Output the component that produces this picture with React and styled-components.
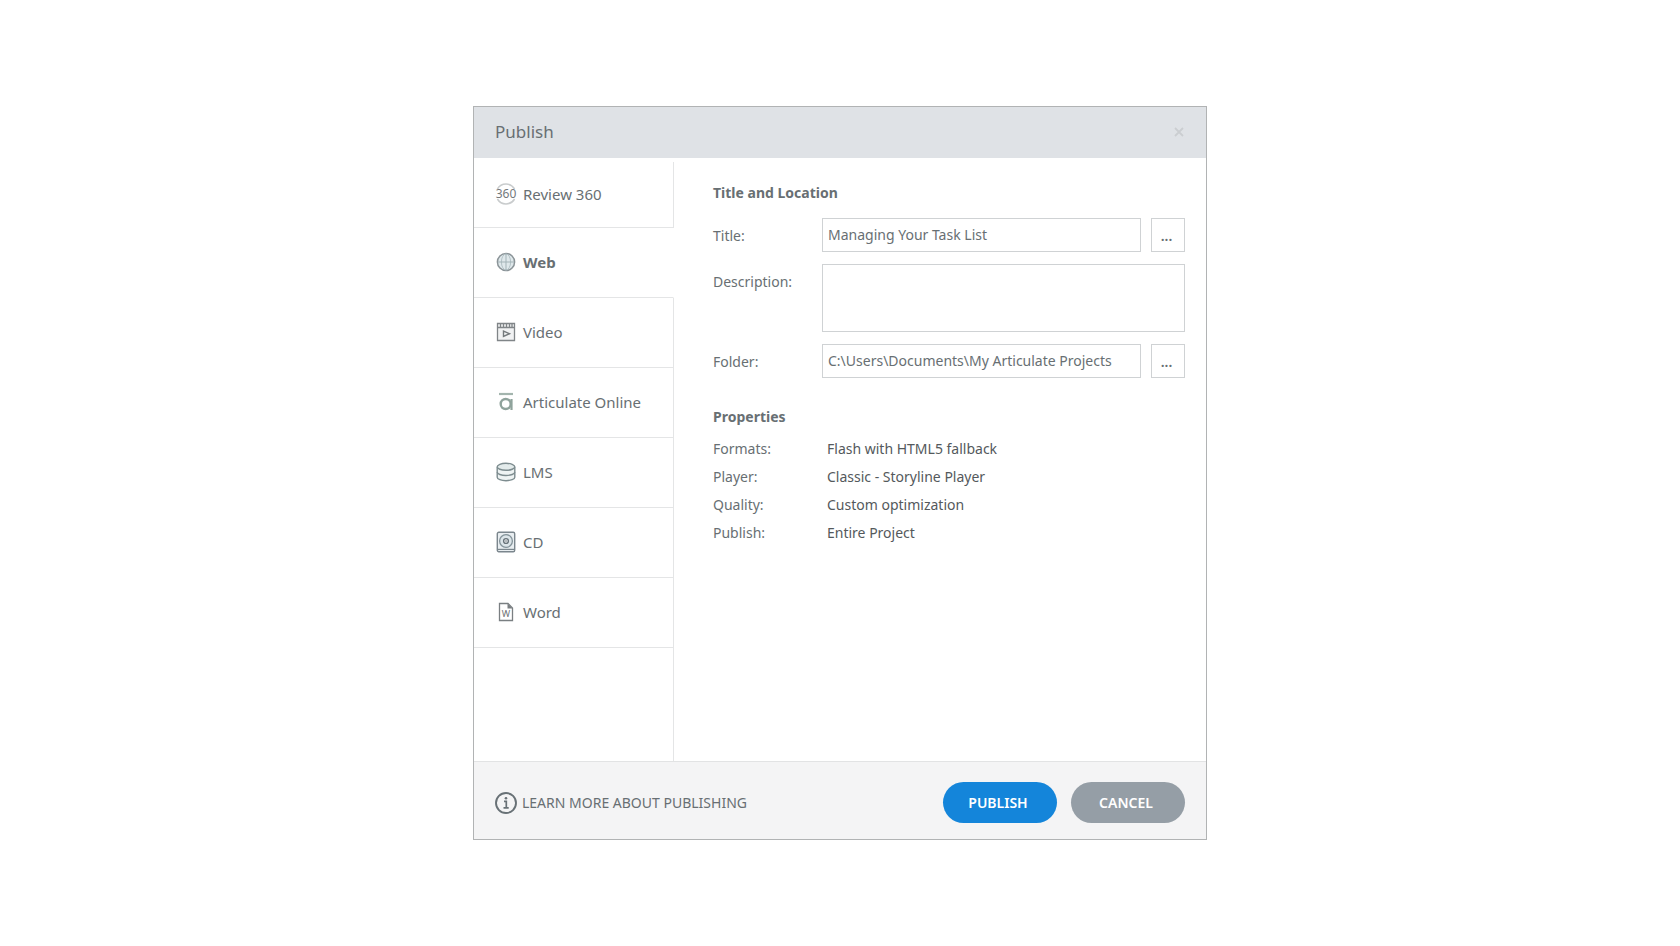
import React, { useState } from 'react';
import styled, { createGlobalStyle, css } from 'styled-components';

const text = '#686f73';
const line = '#e4e5e6';
const border = '#cfd2d4';
const fontStack = '"Noto Sans", "Open Sans", sans-serif';

const tabs = [
  { id: 'review', label: 'Review 360', Icon: ReviewIcon },
  { id: 'web', label: 'Web', Icon: WebIcon },
  { id: 'video', label: 'Video', Icon: VideoIcon },
  { id: 'online', label: 'Articulate Online', Icon: ArticulateIcon },
  { id: 'lms', label: 'LMS', Icon: LmsIcon },
  { id: 'cd', label: 'CD', Icon: CdIcon },
  { id: 'word', label: 'Word', Icon: WordIcon },
];

const properties = [
  ['Formats:', 'Flash with HTML5 fallback'],
  ['Player:', 'Classic - Storyline Player'],
  ['Quality:', 'Custom optimization'],
  ['Publish:', 'Entire Project'],
];

function App() {
  const [active, setActive] = useState('web');
  const [title, setTitle] = useState('Managing Your Task List');
  const [description, setDescription] = useState('');
  const [folder, setFolder] = useState('C:\\Users\\Documents\\My Articulate Projects');

  return (
    <Page>
      <GlobalStyle />
      <Dialog role="dialog" aria-labelledby="dialog-title">
        <Header>
          <DialogTitle id="dialog-title">Publish</DialogTitle>
          <CloseButton type="button" aria-label="Close">
            <CloseIcon />
          </CloseButton>
        </Header>
        <Body>
          <Sidebar>
            {tabs.map(({ id, label, Icon }) => (
              <Tab key={id} type="button" $active={id === active} onClick={() => setActive(id)}>
                <Icon />
                {label}
              </Tab>
            ))}
            <SidebarRest />
          </Sidebar>
          <Content>
            <Heading>Title and Location</Heading>
            <Form>
              <Label htmlFor="title">Title:</Label>
              <FieldRow>
                <Input id="title" value={title} onChange={(e) => setTitle(e.target.value)} />
                <BrowseButton type="button" aria-label="Title options">...</BrowseButton>
              </FieldRow>
              <Label htmlFor="description">Description:</Label>
              <TextArea
                id="description"
                value={description}
                onChange={(e) => setDescription(e.target.value)}
              />
              <Label htmlFor="folder">Folder:</Label>
              <FieldRow>
                <Input id="folder" value={folder} onChange={(e) => setFolder(e.target.value)} />
                <BrowseButton type="button" aria-label="Browse folders">...</BrowseButton>
              </FieldRow>
            </Form>
            <Heading>Properties</Heading>
            <PropertyList>
              {properties.map(([name, value]) => (
                <React.Fragment key={name}>
                  <dt>{name}</dt>
                  <PropertyValue>{value}</PropertyValue>
                </React.Fragment>
              ))}
            </PropertyList>
          </Content>
        </Body>
        <Footer>
          <LearnMore href="#learn-more">
            <InfoIcon />
            LEARN MORE ABOUT PUBLISHING
          </LearnMore>
          <Actions>
            <ActionButton type="button" $primary>PUBLISH</ActionButton>
            <ActionButton type="button">CANCEL</ActionButton>
          </Actions>
        </Footer>
      </Dialog>
    </Page>
  );
}

function ReviewIcon() {
  return (
    <TabIcon viewBox="0 0 22 22">
      <path d="M2.4 6a10 10 0 0 1 17.2 0M2.400 16a10 10 0 0 0 17.200 0" stroke="#c9cccd" strokeWidth="1.5" />
      <text x="11" y="15" textAnchor="middle" fontSize="12" fill="#74797c">360</text>
    </TabIcon>
  );
}

function WebIcon() {
  return (
    <TabIcon viewBox="0 0 22 22">
      <circle cx="11" cy="11" r="8.6" fill="#dfe8eb" stroke="#8b9498" strokeWidth="1.5" />
      <ellipse cx="11" cy="11" rx="4.6" ry="8" stroke="#b3c2c6" />
      <path d="M11 3v16M3 11h16" stroke="#a3b3b7" />
    </TabIcon>
  );
}

function VideoIcon() {
  return (
    <TabIcon viewBox="0 0 22 22">
      <path d="M2.5 2.5h17v17h-17z" fill="#f1f2f3" stroke="#808588" strokeWidth="1.3" />
      <path d="M2.5 6.5h17M5.5 3v3.5M8.5 3v3.5M11.5 3v3.5M14.5 3v3.5M17 3v3.5" stroke="#808588" strokeWidth="1.3" />
      <path d="M8.5 10v5.4l6-2.7z" stroke="#74797c" strokeWidth="1.4" />
    </TabIcon>
  );
}

function ArticulateIcon() {
  return (
    <TabIcon viewBox="0 0 22 22">
      <path d="M4 3h14" stroke="#a3b5ae" strokeWidth="2.2" />
      <circle cx="10.7" cy="13" r="5" stroke="#8fa39c" strokeWidth="2.4" />
      <path d="M16.500 8v11" stroke="#8fa39c" strokeWidth="2.2" />
    </TabIcon>
  );
}

function LmsIcon() {
  return (
    <TabIcon viewBox="0 0 22 22">
      <path d="M2.2 6v10.2c0 2 4 3.5 8.8 3.5s8.8-1.5 8.8-3.5V6" fill="#eef3f3" stroke="#7d8c8f" strokeWidth="1.4" />
      <path d="M2.2 11c0 2 4 3.5 8.8 3.5s8.8-1.5 8.8-3.5" stroke="#7d8c8f" strokeWidth="1.4" />
      <ellipse cx="11" cy="5.8" rx="8.8" ry="3.5" fill="#e3ebeb" stroke="#7d8c8f" strokeWidth="1.4" />
    </TabIcon>
  );
}

function CdIcon() {
  return (
    <TabIcon viewBox="0 0 22 22">
      <rect x="2.3" y="1.3" width="17.4" height="19.4" rx="1.5" fill="#e9eef1" stroke="#7b868d" strokeWidth="1.4" />
      <path d="M2.5 18.4h17" stroke="#7b868d" strokeWidth="1.2" />
      <circle cx="11" cy="10" r="6.4" fill="#dce5e9" stroke="#84939a" strokeWidth="1.3" />
      <circle cx="11" cy="10" r="2.4" fill="#f4f6f7" stroke="#68737a" strokeWidth="1.4" />
      <circle cx="11" cy="10" r="0.8" fill="#68737a" />
    </TabIcon>
  );
}

function WordIcon() {
  return (
    <TabIcon viewBox="0 0 22 22">
      <path d="M4.5 2.5h8.500l4.500 4.500v12.500h-13z" stroke="#7a7f82" strokeWidth="1.3" />
      <path d="M12.5 2.5v5h5z" fill="#7a7f82" />
      <text x="11" y="16" textAnchor="middle" fontSize="9" fill="#6c7174">W</text>
    </TabIcon>
  );
}

function InfoIcon() {
  return (
    <TabIcon viewBox="0 0 22 22">
      <circle cx="11" cy="11" r="10" stroke="#687176" strokeWidth="1.9" />
      <path d="M9 9.4h2.300v6.300M8.500 15.800h5.200" stroke="#687176" strokeWidth="1.7" />
      <circle cx="11" cy="6.2" r="1.3" fill="#687176" />
    </TabIcon>
  );
}

function CloseIcon() {
  return (
    <svg width="10" height="10" viewBox="0 0 10 10" fill="none">
      <path d="M1 1l8 8M9 1l-8 8" stroke="#cbced1" strokeWidth="1.8" />
    </svg>
  );
}

const GlobalStyle = createGlobalStyle`
  *, *::before, *::after {
    box-sizing: border-box;
  }

  body {
    margin: 0;
    background: #fff;
    color: ${text};
    font: 14px/20px ${fontStack};
  }

  button, input, textarea {
    color: inherit;
    font: inherit;
  }`;

const Page = styled.main`
  display: flex;
  align-items: center;
  justify-content: center;
  min-height: 100vh;`;

const Dialog = styled.section`
  display: flex;
  flex-direction: column;
  width: 100%;
  max-width: 734px;
  border: 1px solid #b1b3b4;`;

const Header = styled.header`
  display: flex;
  align-items: center;
  justify-content: space-between;
  height: 51px;
  padding: 0 20px 1px 21px;
  background: #dfe2e6;`;

const DialogTitle = styled.h1`
  margin: 0;
  font-size: 17px;
  font-weight: 400;`;

const CloseButton = styled.button`
  display: flex;
  padding: 2px;
  border: 0;
  background: none;`;

const Body = styled.div`
  display: flex;
  min-height: 603px;`;

const Sidebar = styled.nav`
  display: flex;
  flex-direction: column;
  flex: 0 0 200px;
  padding-top: 4px;`;

const Tab = styled.button`
  display: flex;
  align-items: center;
  gap: 6px;
  height: 70px;
  padding: 0 0 2px 21px;
  border: 0;
  border-right: 1px solid ${line};
  border-bottom: 1px solid ${line};
  background: none;
  font-size: 15px;
  text-align: left;

  &:first-child {
    height: 66px;
  }

  ${({ $active }) => $active && css`
    border-right-color: transparent;
    font-weight: 700;
  `}`;

const TabIcon = styled.svg`
  flex: none;
  width: 22px;
  height: 22px;
  overflow: visible;
  fill: none;`;

const SidebarRest = styled.div`
  flex: 1;
  border-right: 1px solid ${line};`;

const Content = styled.div`
  flex: 1;
  min-width: 0;
  padding: 25px 21px 24px 39px;`;

const Heading = styled.h2`
  margin: 0;
  font-size: 14px;
  font-weight: 700;
  line-height: 20px;`;

const Form = styled.form`
  display: grid;
  grid-template-columns: 109px 1fr;
  row-gap: 12px;
  margin: 15px 0 29px;`;

const Label = styled.label`
  padding-top: 8px;`;

const FieldRow = styled.div`
  display: flex;
  gap: 10px;`;

const Input = styled.input`
  flex: 1;
  min-width: 0;
  height: 34px;
  padding: 0 5px 1px;
  border: 1px solid ${border};
  background: #fff;`;

const TextArea = styled.textarea`
  height: 68px;
  padding: 6px;
  border: 1px solid ${border};
  background: #fff;
  resize: none;`;

const BrowseButton = styled.button`
  width: 34px;
  height: 34px;
  padding: 1px 3px 0 0;
  border: 1px solid ${border};
  background: #fff;
  font-weight: 600;`;

const PropertyList = styled.dl`
  display: grid;
  grid-template-columns: 114px 1fr;
  margin: 8px 0 0;
  line-height: 28px;`;

const PropertyValue = styled.dd`
  margin: 0;
  color: #54595c;`;

const Footer = styled.footer`
  display: flex;
  align-items: center;
  justify-content: space-between;
  height: 78px;
  padding: 4px 21px 0;
  border-top: 1px solid #e2e3e4;
  background: #f4f4f5;`;

const LearnMore = styled.a`
  display: flex;
  align-items: center;
  gap: 5px;
  color: inherit;
  text-decoration: none;`;

const Actions = styled.div`
  display: flex;
  gap: 14px;`;

const ActionButton = styled.button`
  width: 114px;
  height: 41px;
  padding: 0 4px 0 0;
  border: 0;
  border-radius: 21px;
  background: ${({ $primary }) => ($primary ? '#1485da' : '#959ea6')};
  color: #fff;
  font-weight: 600;`;

export default App;
